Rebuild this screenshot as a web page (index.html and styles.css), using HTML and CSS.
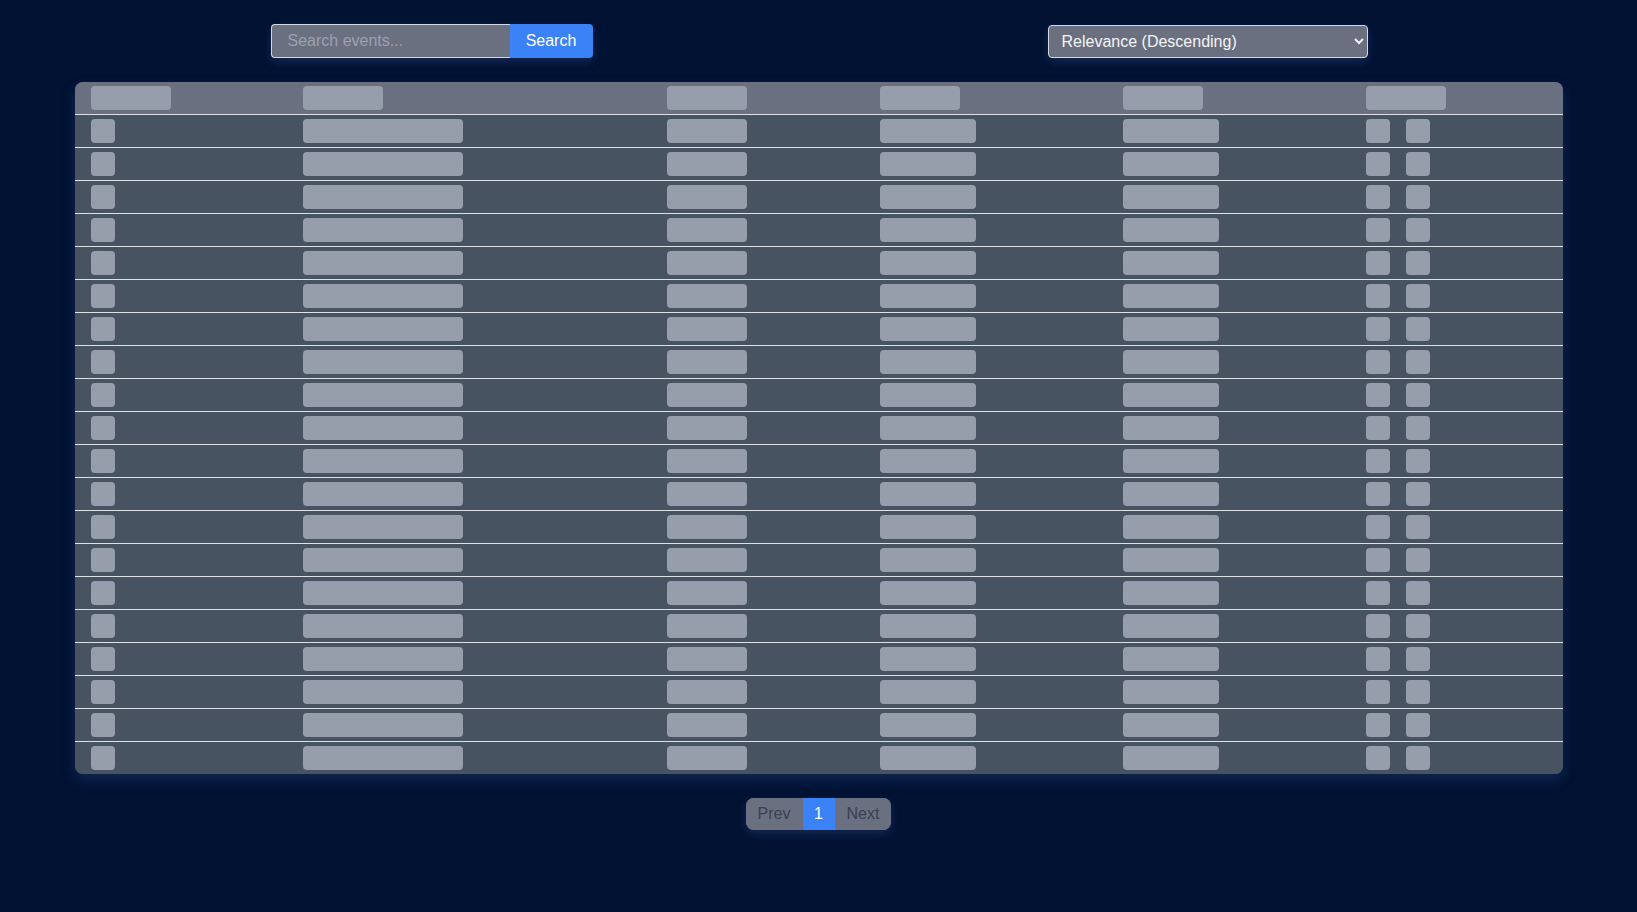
FILE: index.html
```html
<!DOCTYPE html>
<html lang="en">
<head>
<meta charset="utf-8">
<title>Events</title>
<link rel="stylesheet" href="styles.css">
</head>
<body>
<main class="page">
  <div class="toolbar">
    <form class="search-group" onsubmit="return false">
      <input class="search-input" type="text" placeholder="Search events...">
      <button class="search-btn" type="submit">Search</button>
    </form>
    <select class="sort-select">
      <option>Relevance (Descending)</option>
      <option>Relevance (Ascending)</option>
    </select>
  </div>

  <div class="table-wrap">
    <table class="events">
      <thead>
        <tr>
          <th><span class="sk sk-h"></span></th>
          <th><span class="sk sk-h"></span></th>
          <th><span class="sk sk-h"></span></th>
          <th><span class="sk sk-h"></span></th>
          <th><span class="sk sk-h"></span></th>
          <th><span class="sk sk-h"></span></th>
        </tr>
      </thead>
      <tbody id="rows"></tbody>
    </table>
  </div>

  <nav class="pager">
    <button class="pg">Prev</button>
    <button class="pg pg-active">1</button>
    <button class="pg">Next</button>
  </nav>
</main>
<script>
  var tb = document.getElementById('rows');
  var html = '';
  for (var i = 0; i < 20; i++) {
    html += '<tr>' +
      '<td><span class="sk sk-sq"></span></td>' +
      '<td><span class="sk sk-wide"></span></td>' +
      '<td><span class="sk sk-h"></span></td>' +
      '<td><span class="sk sk-mid"></span></td>' +
      '<td><span class="sk sk-mid"></span></td>' +
      '<td><div class="acts"><span class="sk sk-sq"></span><span class="sk sk-sq"></span></div></td>' +
      '</tr>';
  }
  tb.innerHTML = html;
</script>
</body>
</html>
```

FILE: styles.css
```css
* { box-sizing: border-box; }

html, body {
  margin: 0;
  padding: 0;
  background: #011233;
  font-family: "Liberation Sans", Arial, sans-serif;
  font-size: 16px;
}

body { min-height: 912px; }

.page {
  width: 1488px;
  margin: 0 auto;
  padding-top: 24px;
}

.toolbar {
  display: flex;
  justify-content: space-between;
  align-items: center;
  padding: 0 195px 0 196px;
  margin-bottom: 24px;
}

.search-group {
  display: flex;
  margin: 0;
  border-radius: 4px;
  box-shadow: 0 4px 10px rgba(90, 120, 190, 0.22);
}

.search-input {
  width: 239px;
  height: 34px;
  padding: 0 16px;
  background: #6b7080;
  border: 1px solid #d4d8df;
  border-right: none;
  border-radius: 4px 0 0 4px;
  color: #f3f4f6;
  font: inherit;
  outline: none;
}

.search-input::placeholder { color: #9ba2af; }

.search-btn {
  width: 83px;
  height: 34px;
  padding: 0 16px;
  background: #3b82f6;
  border: none;
  border-radius: 0 4px 4px 0;
  color: #ffffff;
  font: inherit;
}

.sort-select {
  width: 320px;
  height: 33px;
  padding: 0 8px 0 9px;
  background: #6b7080;
  border: 1px solid #d4d8df;
  border-radius: 4px;
  color: #f3f4f6;
  font: inherit;
  box-shadow: 0 4px 10px rgba(90, 120, 190, 0.22);
}

.table-wrap {
  border-radius: 8px;
  overflow: hidden;
  background: #485362;
  box-shadow: 0 6px 14px rgba(70, 100, 170, 0.25);
}

.events {
  width: 100%;
  border-collapse: separate;
  border-spacing: 0;
}

.events th,
.events td {
  padding: 4px 16px;
  text-align: left;
  height: 33px;
  line-height: 0;
  border-bottom: 1px solid #dde1e8;
}

.events thead th { background: #6b7080; }

.events tbody td { background: #485362; }

.events tbody tr:last-child td {
  border-bottom: none;
  height: 32px;
}

.sk {
  display: inline-block;
  height: 24px;
  background: #979eab;
  border-radius: 4px;
  vertical-align: top;
}

.sk-h { width: 80px; }
.sk-sq { width: 24px; }
.sk-wide { width: 160px; }
.sk-mid { width: 96px; }

.acts {
  display: flex;
  gap: 16px;
}

.pager {
  display: flex;
  width: max-content;
  margin: 24px auto 0;
  border-radius: 8px;
  overflow: hidden;
  background: #6b7080;
  box-shadow: 0 4px 10px rgba(90, 120, 190, 0.22);
}

.pg {
  height: 32px;
  padding: 0 12px;
  border: none;
  background: #6b7080;
  color: #374151;
  font: inherit;
}

.pg-active {
  background: #3b82f6;
  color: #ffffff;
  width: 32px;
  padding: 0;
}
```
